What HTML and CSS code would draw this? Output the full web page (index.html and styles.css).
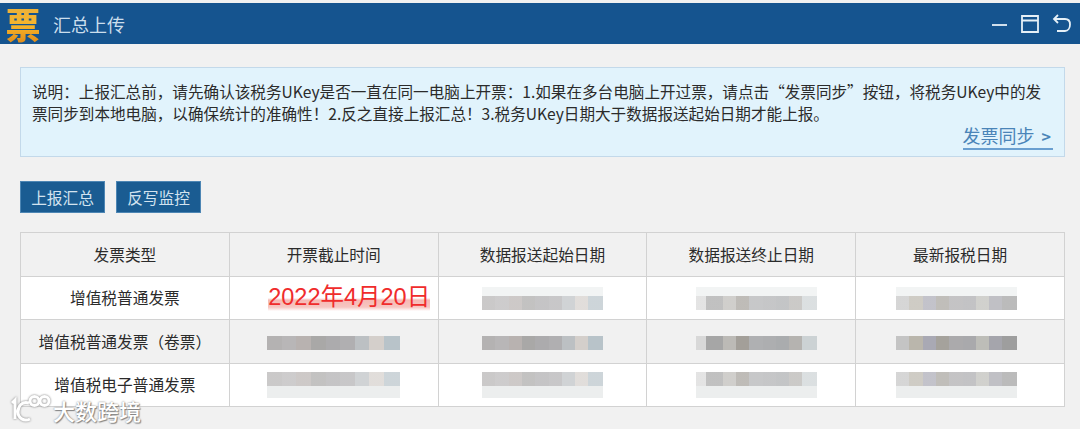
FILE: index.html
```html
<!DOCTYPE html>
<html>
<head>
  <title>汇总上传</title>
  <link rel="stylesheet" href="styles.css">
</head>
<body>
  <div class="titlebar">
    <span class="logo">票</span>
    <span class="title">汇总上传</span>
    <div class="winbtns">
      <svg width="16" height="20" viewBox="0 0 16 20"><path d="M0 11h15" /></svg>
      <svg width="20" height="20" viewBox="0 0 20 20"><path d="M2 2h16v16H2zM2 6.500h16" /></svg>
      <svg width="20" height="20" viewBox="0 0 20 20"><path d="M6 1 2 5l4 4M2 5h11c3 0 5 2 5 5.500S16 17 13 17H5" /></svg>
    </div>
  </div>

  <div class="content">
    <div class="notice">
      <p>说明：上报汇总前，请先确认该税务UKey是否一直在同一电脑上开票：1.如果在多台电脑上开过票，请点击“发票同步”按钮，将税务UKey中的发票同步到本地电脑，以确保统计的准确性！2.反之直接上报汇总！3.税务UKey日期大于数据报送起始日期才能上报。</p>
      <a class="sync" href="#">发票同步 <span class="gt">&gt;</span></a>
    </div>

    <div class="actions">
      <button type="button">上报汇总</button>
      <button type="button">反写监控</button>
    </div>

    <table class="report">
      <tr class="head">
        <td>发票类型</td>
        <td>开票截止时间</td>
        <td>数据报送起始日期</td>
        <td>数据报送终止日期</td>
        <td>最新报税日期</td>
      </tr>
      <tr class="odd">
        <td>增值税普通发票</td>
        <td class="date-cell"><span class="date">2022年4月20日</span></td>
        <td><span class="smear"><b class="wash top"></b><b class="bar tone-a"></b></span></td>
        <td class="nudge-r"><span class="smear"><b class="wash top"></b><b class="bar tone-b"></b></span></td>
        <td class="nudge-l"><span class="smear"><b class="wash top"></b><b class="bar tone-c"></b></span></td>
      </tr>
      <tr class="even">
        <td>增值税普通发票（卷票）</td>
        <td><span class="smear wide"><b class="bar tone-a deep"></b></span></td>
        <td><span class="smear"><b class="bar tone-a deep"></b></span></td>
        <td class="nudge-r"><span class="smear"><b class="bar tone-b deep"></b></span></td>
        <td class="nudge-l"><span class="smear"><b class="bar tone-c deep"></b></span></td>
      </tr>
      <tr class="odd">
        <td>增值税电子普通发票</td>
        <td><span class="smear wide"><b class="bar tone-a"></b><b class="wash"></b></span></td>
        <td><span class="smear"><b class="bar tone-a"></b><b class="wash"></b></span></td>
        <td class="nudge-r"><span class="smear"><b class="bar tone-b"></b><b class="wash"></b></span></td>
        <td class="nudge-l"><span class="smear"><b class="bar tone-c"></b><b class="wash"></b></span></td>
      </tr>
    </table>
  </div>

  <div class="watermark">
    <svg width="42" height="30" viewBox="0 0 42 30"><path d="M3 8 6 5v19M20 8c-7-2-11 3-11 9s6 10 12 7M21 6a4.500 4.500 0 1 0 9 0 4.500 4.500 0 1 0-9 0M31 6a4.500 4.500 0 1 0 9 0 4.500 4.500 0 1 0-9 0" /></svg>
    <span>大数跨境</span>
  </div>
</body>
</html>
```

FILE: styles.css
```css
html, body {
  margin: 0;
  height: 429px;
  overflow: hidden;
}

body {
  position: relative;
  padding-top: 3px;
  box-sizing: border-box;
  background-color: #f1f1f1;
  font-family: "Noto Sans CJK SC", "Liberation Sans", sans-serif;
  font-size: 15.700px;
  color: #2b2b2b;
}

/* title bar */
.titlebar {
  display: flex;
  align-items: center;
  height: 41px;
  padding: 0 8px 0 5px;
  background-color: #15548f;
}

.logo {
  width: 36px;
  font-size: 35px;
  font-weight: 900;
  line-height: 41px;
  text-align: center;
  color: #f0a72c;
  background-image: linear-gradient(to bottom, #e8b040, #f7b52a 55%, #e08a18);
  -webkit-background-clip: text;
  background-clip: text;
  -webkit-text-fill-color: transparent;
}

.title {
  margin-left: 12px;
  font-size: 18px;
  color: #cbdeec;
}

.winbtns {
  display: flex;
  align-items: center;
  gap: 12px;
  margin-left: auto;
}

.winbtns svg {
  fill: none;
  stroke: #e6f0f7;
  stroke-width: 1.8;
}

/* notice */
.content {
  padding: 23px 15px 0 20px;
}

.notice {
  height: 90px;
  padding: 12px 11px 0;
  box-sizing: border-box;
  background-color: #e1f3fc;
  border: 1px solid #c3d9ea;
}

.notice p {
  margin: 0;
  font-size: 15.600px;
  line-height: 22px;
}

.sync {
  display: block;
  width: max-content;
  margin: -1px 0 0 auto;
  padding-right: 2px;
  font-size: 18px;
  line-height: 24px;
  color: #4a84b8;
  text-decoration: none;
  border-bottom: 2px solid #6a9fd0;
}

.gt {
  margin-left: 3px;
  font-size: 16px;
  font-weight: 700;
}

/* buttons */
.actions {
  display: flex;
  gap: 11px;
  margin-top: 24px;
}

.actions button {
  width: 85px;
  height: 32px;
  padding: 0;
  font-family: inherit;
  font-size: 15.700px;
  color: #d3e3ef;
  background-color: #1a5c92;
  border: 1px solid #4d86b4;
}

/* table */
.report {
  width: 1045px;
  margin-top: 19px;
  border-collapse: collapse;
  table-layout: fixed;
  background-color: #fff;
}

.report td {
  height: 42.500px;
  padding: 0;
  text-align: center;
  border: 1px solid #d2d2d2;
}

.head td,
.even td {
  background-color: #f1f1f1;
}

.nudge-r {
  padding-left: 10px !important;
  box-sizing: border-box;
}

.nudge-l {
  padding-right: 7px !important;
  box-sizing: border-box;
}

.report .date-cell {
  padding-left: 31px;
  box-sizing: border-box;
}

.date {
  display: inline-block;
  padding-bottom: 1px;
  font-family: "Liberation Sans", "Noto Sans CJK SC", sans-serif;
  font-size: 23.500px;
  line-height: 25px;
  color: #f02c2c;
  background-image: linear-gradient(to bottom, #fff 50%, #f6b9b4 58%, #f6c6c2 85%, #fff);
}

/* blurred out cells */
.smear {
  display: inline-block;
  width: 121px;
  vertical-align: middle;
}

.smear.wide {
  width: 133px;
}

.smear b {
  display: block;
}

.bar {
  height: 14px;
  opacity: 0.7;
}

.bar.deep {
  opacity: 1;
}

.wash {
  height: 12px;
  background-color: #eceeee;
}

.wash.top {
  height: 9px;
  background-color: #f2f4f4;
}

.tone-a {
  background-image: linear-gradient(to right,
    #b4b2b2 0 11%, #b8b6b7 11% 22%, #b8b2b0 22% 33%, #a9a8a7 33% 44%,
    #acabad 44% 55%, #b0afb1 55% 66%, #bcc0c3 66% 77%, #d4cfcb 77% 88%, #b8c3c9 88% 100%);
}

.tone-b {
  background-image: linear-gradient(to right,
    #d8d8d8 0 8%, #a6a6a6 8% 22%, #bcbab6 22% 33%, #a39f99 33% 44%,
    #afb0b2 44% 55%, #adaeb0 55% 66%, #aaacae 66% 77%, #b5b3b0 77% 88%, #ccd2d4 88% 100%);
}

.tone-c {
  background-image: linear-gradient(to right,
    #c4c4c4 0 11%, #bab6ac 11% 22%, #a9a9b4 22% 33%, #a5a29c 33% 44%,
    #abaaac 44% 55%, #a9a9ac 55% 66%, #bdbdb8 66% 77%, #a5a5ac 77% 88%, #9e9e9e 88% 100%);
}

/* watermark over the table corner */
.watermark {
  position: absolute;
  left: 9px;
  top: 395px;
  display: flex;
  align-items: center;
  gap: 2px;
  font-size: 22px;
  font-weight: 500;
  line-height: 28px;
  color: #fff;
  text-shadow: 0 0 2px #777, 1px 1px 1px #8a8a8a;
}

.watermark svg {
  fill: none;
  stroke: #fff;
  stroke-width: 3;
  filter: drop-shadow(0 0 1px #777);
}
```
